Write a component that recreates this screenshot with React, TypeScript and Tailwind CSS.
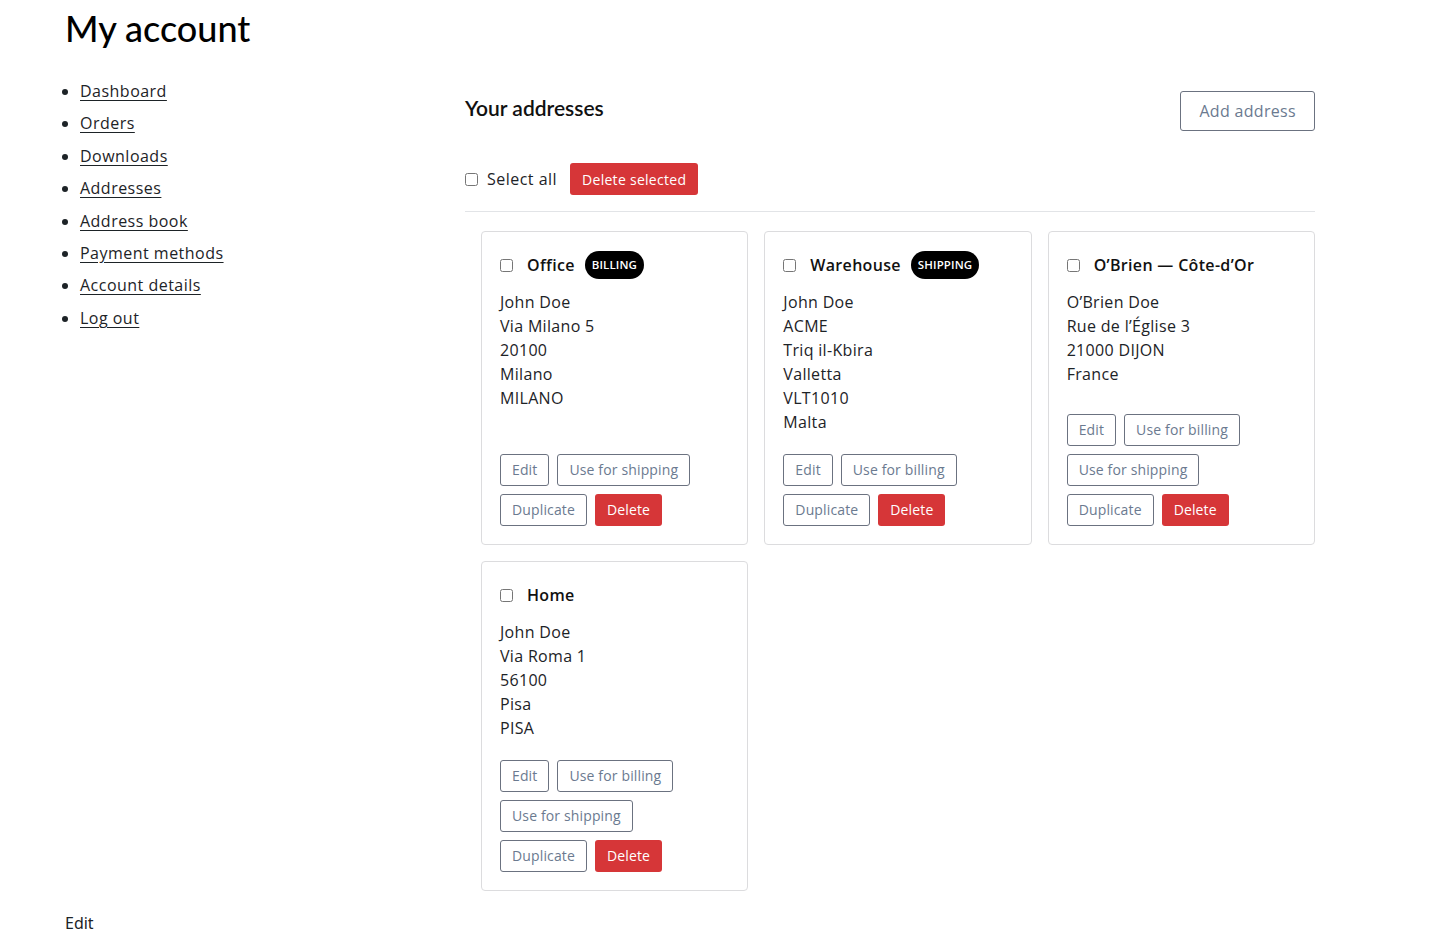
import React from "react";

type Addr = {
  title: string;
  badge?: string;
  lines: string[];
  rows: string[][];
};

const cards: Addr[] = [
  {
    title: "Office",
    badge: "BILLING",
    lines: ["John Doe", "Via Milano 5", "20100", "Milano", "MILANO"],
    rows: [["Edit", "Use for shipping"], ["Duplicate", "Delete"]],
  },
  {
    title: "Warehouse",
    badge: "SHIPPING",
    lines: ["John Doe", "ACME", "Triq il-Kbira", "Valletta", "VLT1010", "Malta"],
    rows: [["Edit", "Use for billing"], ["Duplicate", "Delete"]],
  },
  {
    title: "O\u2019Brien \u2014 C\u00f4te-d\u2019Or",
    lines: ["O\u2019Brien Doe", "Rue de l\u2019\u00c9glise 3", "21000 DIJON", "France"],
    rows: [["Edit", "Use for billing"], ["Use for shipping"], ["Duplicate", "Delete"]],
  },
  {
    title: "Home",
    lines: ["John Doe", "Via Roma 1", "56100", "Pisa", "PISA"],
    rows: [["Edit", "Use for billing"], ["Use for shipping"], ["Duplicate", "Delete"]],
  },
];

const nav = [
  "Dashboard",
  "Orders",
  "Downloads",
  "Addresses",
  "Address book",
  "Payment methods",
  "Account details",
  "Log out",
];

function Btn({ label }: { label: string }) {
  if (label === "Delete") {
    return (
      <button className="h-[32px] px-[12px] rounded-[3px] bg-[#d63638] text-white text-[14px] leading-none tracking-[0.01em]">
        {label}
      </button>
    );
  }
  return (
    <button className="h-[32px] px-[11px] rounded-[3px] border border-[#6b7280] bg-white text-[#6b7a90] text-[14px] leading-none tracking-[0.01em]">
      {label}
    </button>
  );
}

function Card({ a }: { a: Addr }) {
  return (
    <div className="flex flex-col border border-[#dcdcde] rounded-[4px] bg-white pt-[19px] pb-[18px] px-[18px]">
      <div className="flex items-center h-[28px]">
        <input type="checkbox" className="m-0 w-[13px] h-[13px]" />
        <span className="ml-[14px] text-[16px] font-semibold text-[#111] tracking-[0.02em]">{a.title}</span>
        {a.badge && (
          <span className="ml-[10px] h-[28px] px-[7px] rounded-full bg-black text-white text-[11.5px] font-semibold flex items-center tracking-[0.01em]">
            {a.badge}
          </span>
        )}
      </div>
      <div className="mt-[11px] text-[16px] leading-[24px] text-[#1d2327] tracking-[0.02em]">
        {a.lines.map((l, i) => (
          <div key={i}>{l}</div>
        ))}
      </div>
      <div className="mt-auto pt-[20px] flex flex-col gap-[8px]">
        {a.rows.map((r, i) => (
          <div key={i} className="flex gap-[8px]">
            {r.map((b) => (
              <Btn key={b} label={b} />
            ))}
          </div>
        ))}
      </div>
    </div>
  );
}

export default function App() {
  return (
    <div
      className="bg-white min-h-[942px] text-[#1d2327]"
      style={{ fontFamily: '"Open Sans", "Noto Sans", sans-serif' }}
    >
      <div className="w-[1250px] ml-[65px]">
        <h1
          className="pt-[5px] text-[36px] leading-[46px] font-medium text-black"
          style={{ fontFamily: 'Lato, "Open Sans", sans-serif' }}
        >
          My account
        </h1>
        <div className="flex mt-[24px]">
          <nav className="w-[400px] shrink-0">
            <ul className="list-disc pl-[15px] text-[16px] leading-[32.4px] tracking-[0.03em]">
              {nav.map((n) => (
                <li key={n}>
                  <a href="#" className="underline underline-offset-[3px] text-[#1d2327]">
                    {n}
                  </a>
                </li>
              ))}
            </ul>
          </nav>
          <main className="w-[850px] pt-[16px]">
            <div className="flex items-center justify-between h-[40px]">
              <h2
                className="mb-[6px] text-[21px] font-semibold text-[#111]"
                style={{ fontFamily: 'Lato, "Open Sans", sans-serif' }}
              >
                Your addresses
              </h2>
              <button className="h-[40px] px-[18px] rounded-[3px] border border-[#6b7280] text-[#6b7a90] text-[16px] tracking-[0.02em]">
                Add address
              </button>
            </div>
            <div className="mt-[32px] flex items-center h-[32px]">
              <input type="checkbox" className="m-0 w-[13px] h-[13px]" />
              <span className="ml-[9px] text-[16px] tracking-[0.03em]">Select all</span>
              <button className="ml-[13px] h-[32px] px-[12px] rounded-[3px] bg-[#d63638] text-white text-[14px] tracking-[0.02em]">
                Delete selected
              </button>
            </div>
            <hr className="mt-[16px] border-0 border-t border-[#e2e4e7]" />
            <div className="mt-[19px] pl-[16px] grid grid-cols-3 gap-[16px]">
              {cards.map((c) => (
                <Card key={c.title} a={c} />
              ))}
            </div>
          </main>
        </div>
        <div
          className="mt-[20px] text-[16px] leading-[24px] text-[#1d2327]"
          style={{ fontFamily: '"Noto Sans", sans-serif' }}
        >
          Edit
        </div>
      </div>
    </div>
  );
}
